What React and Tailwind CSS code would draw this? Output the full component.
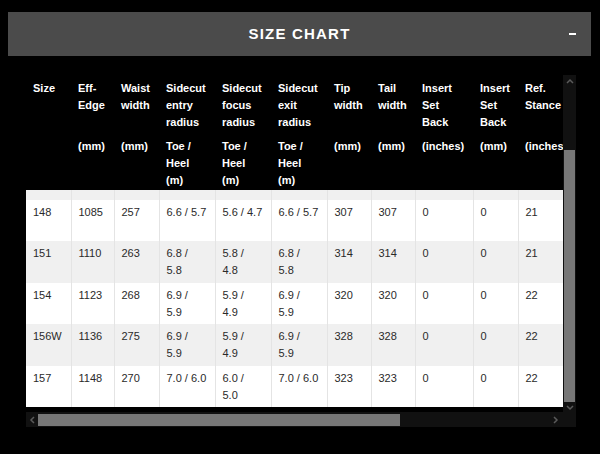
import React from 'react';

const columns = [
  { w: 'w-[45px]', name: ['Size'], unit: [] },
  { w: 'w-[43px]', name: ['Eff-', 'Edge'], unit: ['(mm)'] },
  { w: 'w-[45px]', name: ['Waist', 'width'], unit: ['(mm)'] },
  { w: 'w-[56px]', name: ['Sidecut', 'entry', 'radius'], unit: ['Toe /', 'Heel', '(m)'] },
  { w: 'w-[56px]', name: ['Sidecut', 'focus', 'radius'], unit: ['Toe /', 'Heel', '(m)'] },
  { w: 'w-[56px]', name: ['Sidecut', 'exit', 'radius'], unit: ['Toe /', 'Heel', '(m)'] },
  { w: 'w-[44px]', name: ['Tip', 'width'], unit: ['(mm)'] },
  { w: 'w-[44px]', name: ['Tail', 'width'], unit: ['(mm)'] },
  { w: 'w-[58px]', name: ['Insert', 'Set', 'Back'], unit: ['(inches)'] },
  { w: 'w-[45px]', name: ['Insert', 'Set', 'Back'], unit: ['(mm)'] },
  { w: 'w-[80px]', name: ['Ref.', 'Stance'], unit: ['(inches)'] },
];

const rows = [
  ['148', '1085', '257', ['6.6 / 5.7'], ['5.6 / 4.7'], ['6.6 / 5.7'], '307', '307', '0', '0', '21'],
  ['151', '1110', '263', ['6.8 /', '5.8'], ['5.8 /', '4.8'], ['6.8 /', '5.8'], '314', '314', '0', '0', '21'],
  ['154', '1123', '268', ['6.9 /', '5.9'], ['5.9 /', '4.9'], ['6.9 /', '5.9'], '320', '320', '0', '0', '22'],
  ['156W', '1136', '275', ['6.9 /', '5.9'], ['5.9 /', '4.9'], ['6.9 /', '5.9'], '328', '328', '0', '0', '22'],
  ['157', '1148', '270', ['7.0 / 6.0'], ['6.0 /', '5.0'], ['7.0 / 6.0'], '323', '323', '0', '0', '22'],
];

const Chevron = ({ dir, className }) => {
  const paths = {
    up: 'M1 5 L4 2 L7 5',
    down: 'M1 2 L4 5 L7 2',
    left: 'M5 1 L2 4 L5 7',
    right: 'M2 1 L5 4 L2 7',
  };
  return (
    <svg width="8" height="8" viewBox="0 0 8 8" className={className}>
      <path d={paths[dir]} fill="none" stroke="#5a5a5a" strokeWidth="1.5" />
    </svg>
  );
};

const Lines = ({ lines }) =>
  lines.map((l, i) => (
    <div key={i} className="whitespace-nowrap">
      {l}
    </div>
  ));

const App = () => {
  return (
    <div className="w-[600px] h-[454px] bg-black pt-[12px] font-['Liberation_Sans',Arial,sans-serif]">
      <div className="ml-[8px] w-[583px] h-[44px] bg-[#4b4b4b] relative flex items-center justify-center">
        <h2 className="text-white text-[15px] font-bold tracking-[1.2px]">SIZE CHART</h2>
        <span className="absolute right-[15px] top-[21px] w-[7px] h-[2px] bg-white" />
      </div>

      <div className="ml-[26px] mt-[19px] w-[550px]">
        <div className="flex">
          <div className="w-[537px] h-[337px] overflow-hidden bg-black">
            <table className="table-fixed border-collapse w-[572px] text-[11px] leading-[17px]">
              <thead>
                <tr className="bg-black text-white">
                  {columns.map((c, i) => (
                    <th key={i} className={`${c.w} h-[115px] align-top text-left font-bold px-[7px] pt-[5px]`}>
                      <div className="h-[51px]">
                        <Lines lines={c.name} />
                      </div>
                      {c.unit.length > 0 && (
                        <div className="mt-[7px]">
                          <Lines lines={c.unit} />
                        </div>
                      )}
                    </th>
                  ))}
                </tr>
              </thead>
              <tbody className="text-[#2a2a2a]">
                <tr className="bg-[#f0f0f0] h-[10px]">
                  {columns.map((c, i) => (
                    <td key={i} className={i ? 'border-l border-[#e4e4e4]' : ''} />
                  ))}
                </tr>
                {rows.map((r, ri) => (
                  <tr key={ri} className={`h-[41.4px] ${ri % 2 ? 'bg-[#f0f0f0]' : 'bg-white'}`}>
                    {r.map((v, ci) => (
                      <td
                        key={ci}
                        className={`align-top px-[7px] pt-[4px] ${ci ? 'border-l border-[#e4e4e4]' : ''}`}
                      >
                        {Array.isArray(v) ? <Lines lines={v} /> : <div className="whitespace-nowrap">{v}</div>}
                      </td>
                    ))}
                  </tr>
                ))}
              </tbody>
            </table>
          </div>

          {/* vertical scrollbar */}
          <div className="w-[13px] h-[337px] bg-[#111] flex flex-col items-center">
            <Chevron dir="up" className="mt-[3px]" />
            <div className="mt-[64px] w-[11px] h-[252px] bg-[#777]" />
            <Chevron dir="down" className="mt-[2px]" />
          </div>
        </div>

        {/* horizontal scrollbar */}
        <div className="flex">
          <div className="w-[537px] h-[15px] bg-[#111] flex items-center">
            <Chevron dir="left" className="ml-[3px]" />
            <div className="ml-[1px] w-[362px] h-[12px] bg-[#777]" />
            <Chevron dir="right" className="ml-auto mr-[3px]" />
          </div>
          <div className="w-[13px] h-[15px] bg-[#111]" />
        </div>
      </div>
    </div>
  );
};

export default App;
